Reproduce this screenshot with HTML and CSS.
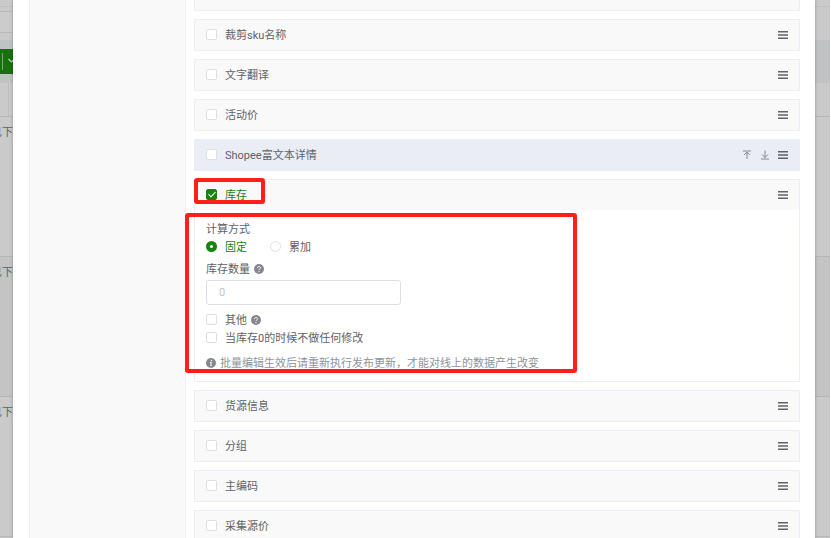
FILE: index.html
```html
<!DOCTYPE html>
<html lang="zh-CN">
<head>
    <meta charset="UTF-8">
    <title>批量编辑</title>
    <link rel="stylesheet" href="styles.css">
</head>
<body>
    <svg class="sprite" aria-hidden="true">
        <symbol id="menu" viewBox="0 0 10 10">
            <path d="M0 1.700h10M0 5h10M0 8.300h10" stroke="#606266" stroke-width="1.600" fill="none"/>
        </symbol>
        <symbol id="top" viewBox="0 0 10 10">
            <path d="M1 1h8M5 9V2M2 5l3-3 3 3" stroke="#85888e" stroke-width="1" fill="none"/>
        </symbol>
        <symbol id="bottom" viewBox="0 0 10 10">
            <path d="M1 9h8M5 .5v7M2 4.500l3 3 3-3" stroke="#85888e" stroke-width="1" fill="none"/>
        </symbol>
        <symbol id="help" viewBox="0 0 10 10">
            <circle cx="5" cy="5" r="5" fill="#85888e"/>
            <path d="M3.500 4c0-2 3-2 3-.2C6.500 4.800 5 4.800 5 6" stroke="#fff" stroke-width="1" fill="none"/>
            <circle cx="5" cy="7.600" r=".65" fill="#fff"/>
        </symbol>
        <symbol id="info" viewBox="0 0 10 10">
            <circle cx="5" cy="5" r="5" fill="#85888e"/>
            <circle cx="5.500" cy="2.500" r=".7" fill="#fff"/>
            <path d="M4 4.400h1.300L4.700 7.600h1" stroke="#fff" stroke-width="1" fill="none"/>
        </symbol>
    </svg>

    <!-- 遮罩下的列表页 -->
    <div class="page" aria-hidden="true">
        <div class="filter"></div>
        <div class="search"></div>
        <div class="toolbar">
            <div class="more">
                <svg viewBox="0 0 8 6"><path d="M1 1l3 3 3-3" stroke="#b9d0b6" stroke-width="1.200" fill="none"/></svg>
            </div>
        </div>
        <div class="thead"><span></span></div>
        <div class="record">已下线</div>
        <div class="record dark">已下线</div>
        <div class="record">已下线</div>
    </div>

    <div class="modal">
        <div class="side"></div>
        <div class="list">
            <div class="item first">
                <label><input type="checkbox">&nbsp;</label>
            </div>
            <div class="item">
                <label><input type="checkbox">裁剪sku名称</label>
                <svg class="icon"><use href="#menu"/></svg>
            </div>
            <div class="item">
                <label><input type="checkbox">文字翻译</label>
                <svg class="icon"><use href="#menu"/></svg>
            </div>
            <div class="item">
                <label><input type="checkbox">活动价</label>
                <svg class="icon"><use href="#menu"/></svg>
            </div>
            <div class="item hover">
                <label><input type="checkbox">Shopee富文本详情</label>
                <svg class="icon"><use href="#top"/></svg>
                <svg class="icon"><use href="#bottom"/></svg>
                <svg class="icon"><use href="#menu"/></svg>
            </div>
            <div class="card">
                <div class="card-head">
                    <label class="on"><input type="checkbox" checked>库存</label>
                    <svg class="icon"><use href="#menu"/></svg>
                </div>
                <div class="card-body">
                    <div class="line">计算方式</div>
                    <div class="line radios">
                        <label class="on"><input type="radio" name="mode" checked>固定</label>
                        <label><input type="radio" name="mode">累加</label>
                    </div>
                    <div class="line stock">
                        <label for="num">库存数量</label>
                        <svg class="tip"><use href="#help"/></svg>
                    </div>
                    <input class="num" id="num" type="text" placeholder="0">
                    <div class="line">
                        <label><input type="checkbox">其他</label>
                        <svg class="tip"><use href="#help"/></svg>
                    </div>
                    <div class="line">
                        <label><input type="checkbox">当库存0的时候不做任何修改</label>
                    </div>
                    <div class="line note">
                        <svg class="tip"><use href="#info"/></svg>
                        <span>批量编辑生效后请重新执行发布更新，才能对线上的数据产生改变</span>
                    </div>
                </div>
                <div class="mark mark-head"></div>
                <div class="mark mark-body"></div>
            </div>
            <div class="item">
                <label><input type="checkbox">货源信息</label>
                <svg class="icon"><use href="#menu"/></svg>
            </div>
            <div class="item">
                <label><input type="checkbox">分组</label>
                <svg class="icon"><use href="#menu"/></svg>
            </div>
            <div class="item">
                <label><input type="checkbox">主编码</label>
                <svg class="icon"><use href="#menu"/></svg>
            </div>
            <div class="item">
                <label><input type="checkbox">采集源价</label>
                <svg class="icon"><use href="#menu"/></svg>
            </div>
        </div>
    </div>
</body>
</html>
```
FILE: styles.css
```css
* {
    margin: 0;
    padding: 0;
    box-sizing: border-box;
}
body {
    position: relative;
    height: 100vh;
    overflow: hidden;
    border-right: 1px solid #fff;
    background: #cacaca;
    color: #606266;
    font: 11px/18px Roboto, "Noto Sans CJK SC", sans-serif;
}
.sprite {
    display: none;
}

/* 背景列表页 */
.page {
    position: absolute;
    top: 0;
    left: 0;
    width: 100%;
    height: 100%;
    overflow: hidden;
}
.filter {
    height: 7px;
    border-bottom: 1px solid #bebfc2;
}
.search {
    width: 100px;
    height: 22px;
    margin: 4px 0 7px;
    border: 1px solid #b8babf;
    border-left: 0;
    background: #cccccc;
}
.toolbar {
    height: 43px;
    padding-top: 9px;
    background: #c0c2c4;
}
.more {
    width: 40px;
    height: 25px;
    padding: 4px 0 4px 2px;
    background: #19700f;
}
.more svg {
    width: 14px;
    height: 17px;
    padding: 5px 0 6px 4px;
    border-left: 1px solid #7fa87a;
}
.thead {
    height: 34px;
    border-bottom: 1px solid #b5b6b9;
}
.thead span {
    display: block;
    width: 9px;
    height: 33px;
    border-right: 1px solid #bcbdc0;
}
.record {
    height: 140px;
    padding-top: 7px;
    border-bottom: 1px solid #b5b6b9;
    text-indent: -9px;
    color: #596470;
}
.dark {
    background: #c4c4c4;
}

/* 弹窗 */
.modal {
    position: relative;
    display: flex;
    height: 100%;
    margin: 0 15px 0 13px;
    padding: 0 15px 0 16px;
    overflow: hidden;
    background: #fff;
    box-shadow: 0 0 3px rgba(0, 0, 0, .3);
}
.side {
    flex: 0 0 157px;
    border: 1px solid #ebeef5;
    border-width: 0 1px;
    background: #f9f9f9;
}
.list {
    flex: 1;
    display: flex;
    flex-direction: column;
    gap: 8px;
    margin-left: 8px;
}
.item {
    display: flex;
    flex: 0 0 32px;
    align-items: center;
    gap: 8px;
    padding: 2px 11px 0;
    border: 1px solid #ebeef5;
    background: #f9f9f9;
}
.first {
    margin-top: -21px;
}
.hover {
    border-color: #eaedf6;
    background: #eaedf6;
}
label {
    display: flex;
    align-items: center;
}
.item label,
.card-head label {
    margin-right: auto;
}
.on {
    color: #1a820f;
}
input[type=checkbox],
input[type=radio] {
    appearance: none;
    width: 11px;
    height: 11px;
    margin: 0 8px 3px 0;
    border: 1px solid #dcdfe6;
    border-radius: 2px;
    background: #fff;
}
input[type=radio] {
    border-radius: 50%;
}
input[type=checkbox]:checked {
    display: flex;
    justify-content: center;
    border-color: #1a820f;
    background: #1a820f;
}
input[type=checkbox]:checked::after {
    content: "";
    box-sizing: border-box;
    width: 4px;
    height: 7px;
    border: solid #fff;
    border-width: 0 1px 1px 0;
    transform: rotate(45deg);
}
input[type=radio]:checked {
    border: 4px solid #1a820f;
}
.icon,
.tip {
    width: 10px;
    height: 10px;
    margin-bottom: 2px;
}

.card {
    position: relative;
    border: 1px solid #ebeef5;
}
.card-head {
    display: flex;
    align-items: center;
    height: 30px;
    padding: 2px 11px 0;
    background: #f9f9f9;
}
.card-body {
    padding: 11px 11px 8px;
}
.line {
    display: flex;
    align-items: center;
    gap: 4px;
}
.radios {
    gap: 23px;
}
.stock {
    margin: 4px 0 1px;
}
.num {
    display: block;
    width: 195px;
    height: 25px;
    margin-bottom: 7px;
    padding: 0 12px;
    border: 1px solid #dcdfe6;
    border-radius: 3px;
    color: #606266;
    font: inherit;
}
.num::placeholder {
    color: #c0c4cc;
}
.note {
    margin-top: 7px;
    color: #909399;
}

/* 红框标注 */
.mark {
    position: absolute;
    border: 4px solid #ff2015;
    border-radius: 3px;
    pointer-events: none;
}
.mark-head {
    top: -2px;
    left: -1px;
    width: 71px;
    height: 26px;
}
.mark-body {
    top: 33px;
    left: -10px;
    width: 392px;
    height: 160px;
}
```
